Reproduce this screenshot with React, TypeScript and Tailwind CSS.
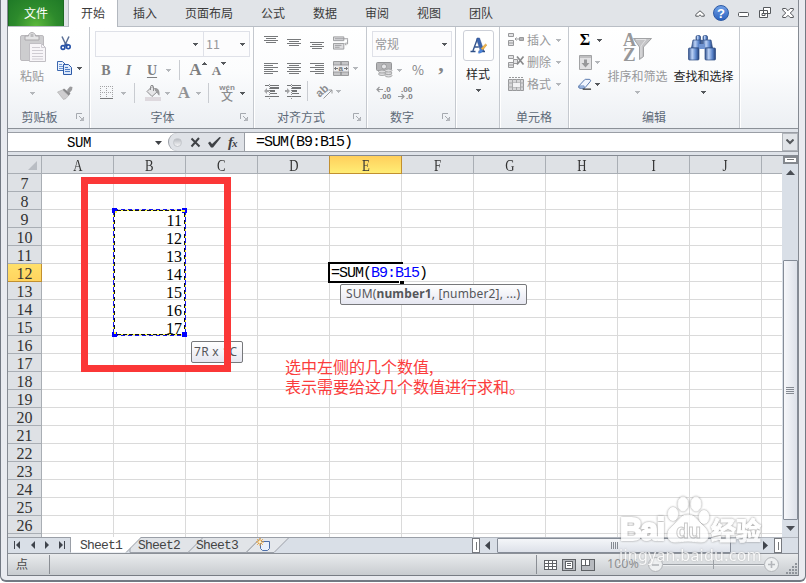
import React from 'react';
import clsx from 'clsx';

const MENU_TABS = ['插入', '页面布局', '公式', '数据', '审阅', '视图', '团队'];
const COLUMNS = ['A', 'B', 'C', 'D', 'E', 'F', 'G', 'H', 'I', 'J'];
const ROWS = Array.from({ length: 20 }, (_, i) => i + 7);
const VALUES: Record<number, number> = { 9: 11, 10: 12, 11: 13, 12: 14, 13: 15, 14: 16, 15: 17 };

/* ---------- small building blocks ---------- */

const Arrow = ({ dim = false, className }: { dim?: boolean; className?: string }) => (
  <svg width="5" height="3" viewBox="0 0 5 3" className={clsx('shrink-0', className)} shapeRendering="crispEdges">
    <path d="M0 0H5V1H4V2H3V3H2V2H1V1H0Z" fill={dim ? '#b4b7bb' : '#55585c'} />
  </svg>
);

const Slot = ({ className, children }: { className?: string; children?: React.ReactNode }) => (
  <div className={clsx('flex shrink-0 items-center justify-center', className)}>{children}</div>
);

const Divider = ({ className }: { className?: string }) => (
  <Slot className={className}>
    <span className="h-5 w-px bg-[#c9ccd1]" />
  </Slot>
);

const Launcher = () => (
  <svg width="8" height="8" viewBox="0 0 8 8" className="absolute right-[5px] top-[9px]" fill="none" stroke="#a5a9af">
    <path d="M0.500 6V0.500H6M3 3l3.500 3.500M7.500 4v3.500H4" />
    <path d="M5 5h3v3H5z" fill="#b5b8bd" stroke="none" />
  </svg>
);

interface GroupProps {
  label?: string;
  launcher?: boolean;
  className?: string;
  children?: React.ReactNode;
}

const Group = ({ label, launcher, className, children }: GroupProps) => (
  <div className={clsx('flex h-full shrink-0 flex-col border-r border-[#c5c9cf] shadow-[1px_0_0_#ffffff]', className)}>
    <div className="h-[77px] shrink-0">{children}</div>
    <div className={clsx('relative h-6 shrink-0 text-center leading-[25px] text-[#5e6a78]', launcher && 'pr-[18px]')}>
      {label}
      {launcher && <Launcher />}
    </div>
  </div>
);

/* ---------- ribbon icons ---------- */

const PasteIcon = () => (
  <svg width="28" height="31" viewBox="0 0 28 31">
    <rect x="0.500" y="3.500" width="23" height="25" rx="1.500" fill="#cdcdcf" stroke="#bbb9bd" />
    <path d="M5 4h3.500c0-4.500 7-4.500 7 0H19v4H5z" fill="#e5e5e6" stroke="#aaa8ab" />
    <rect x="10.500" y="2" width="3" height="3" fill="#bdbdbf" />
    <path d="M9.500 11.500h12l4 4v14h-16z" fill="#f7f5f8" stroke="#c1bfc4" />
    <path d="M21.500 11.500v4h4M12 15.500h8M12 18.500h11M12 21.500h11M12 24.500h11M12 27h11" stroke="#cfccd2" fill="none" />
  </svg>
);

const CutIcon = () => (
  <svg width="12" height="15" viewBox="0 0 12 15" fill="none">
    <path d="M2 0.500l4 8.500M9 0.500L5 9" stroke="#5a6f96" strokeWidth="1.500" />
    <path d="M4.500 7.500h3v3h-3z" fill="#3a5c9c" />
    <circle cx="3" cy="11.500" r="1.900" stroke="#2551a8" strokeWidth="1.600" />
    <circle cx="8.300" cy="10.800" r="1.900" stroke="#2551a8" strokeWidth="1.600" />
  </svg>
);

const CopyIcon = () => (
  <svg width="16" height="14" viewBox="0 0 16 14">
    <path d="M0.500 0.500h5l3 3v6h-8z" fill="#eaf2fd" stroke="#3c68b0" />
    <path d="M2 3.500h3M2 5.500h4M2 7.500h4" stroke="#6f98d6" />
    <path d="M6.500 3.500h5l3 3v7h-8z" fill="#dbe8fb" stroke="#2d5aa8" />
    <path d="M8 6.500h3M8 8.500h5M8 10.500h5" stroke="#4f7dc6" />
  </svg>
);

const BrushIcon = () => (
  <svg width="16" height="14" viewBox="0 0 16 14">
    <path d="M10 4l3-3.500 2.500 0.500-0.500 3-3 3.500z" fill="#9c9c9e" />
    <path d="M7 2.500l6.500 5-2 2.500L5.500 4z" fill="#88888a" />
    <path d="M5.500 4L0.500 6l6 7.500 2.500-1 2.500-3z" fill="#cfced0" stroke="#aaa" strokeWidth="0.600" />
  </svg>
);

const BorderIcon = () => (
  <svg width="14" height="14" viewBox="0 0 14 14" shapeRendering="crispEdges" fill="none" stroke="#a3a3a5">
    <path d="M0.500 0v12M6.500 0v12M12.500 0v12M0 0.500h13M0 6.500h13" strokeDasharray="1 1" />
    <path d="M0 12.500h13" stroke="#77787a" />
  </svg>
);

const BucketIcon = () => (
  <svg width="16" height="16" viewBox="0 0 16 16">
    <path d="M2 6.500l5-5 5.500 5-5.500 5z" fill="#e6e6e8" stroke="#8e8e90" />
    <path d="M5.500 5V1.500c0-1.500 3-1.500 3 0V6" fill="none" stroke="#8e8e90" />
    <path d="M10 3c3 0 5 2 4.500 7.500-2 0-2-4-4.500-4.500z" fill="#9b9b9d" />
    <rect y="12" width="16" height="4" fill="#ded9de" />
  </svg>
);

const PhoneticIcon = () => (
  <span className="flex flex-col items-center font-['Liberation_Sans','Noto_Sans_CJK_SC',sans-serif] text-[#8b8c8e]">
    <span className="h-[7px] text-[8px] font-bold leading-[6px]">wén</span>
    <span className="h-[10px] text-[12px] font-medium leading-[10px]">文</span>
  </span>
);

// Text lines of the paragraph buttons, the short ones follow the alignment
const LinesIcon = ({ kind }: { kind: 'left' | 'center' | 'right' }) => {
  const short = kind === 'left' ? 0 : kind === 'center' ? 2 : 5;
  const shortWidth = kind === 'center' ? 10 : 9;
  return (
    <svg width="14" height="11" viewBox="0 0 14 11" shapeRendering="crispEdges" fill="#77797b">
      {[0, 1, 2, 3, 4, 5].map((i) => (
        <rect key={i} x={i % 2 ? short : 0} y={i * 2} width={i % 2 ? shortWidth : 14} height="1" />
      ))}
    </svg>
  );
};

const VerticalIcon = () => (
  <svg width="14" height="7" viewBox="0 0 14 7" shapeRendering="crispEdges" fill="#77797b">
    <path d="M0 0h14v1H0zM2 2h10v1H2zM0 4h14v1H0zM2 6h10v1H2z" />
  </svg>
);

const WrapIcon = () => (
  <svg width="17" height="16" viewBox="0 0 17 16" fill="none" stroke="#9a9b9d">
    <path d="M0.500 1.500h11v4H0.500zM0.500 8.500h11v6H0.500z" fill="#dedee0" />
    <path d="M2 3.500h14M2 10.500h7M2 12.500h5" />
    <path d="M15.500 4v5h-2M14 7.500L12.500 9l1.500 1.500" />
  </svg>
);

const MergeIcon = () => (
  <svg width="16" height="15" viewBox="0 0 16 15">
    <path d="M0.500 0.500h15v14H0.500z" fill="#c6c6c8" stroke="#9a9b9d" />
    <path d="M0 4h16v7H0z" fill="#ececee" stroke="#909193" strokeWidth="0.800" />
    <path d="M8 1v3M8 11v3" stroke="#77797b" />
    <path d="M1.500 7.500h3.500M3 6L1.500 7.500 3 9M14.500 7.500H11M13 6l1.500 1.500L13 9" stroke="#77797b" fill="none" />
    <text x="5.500" y="10" fontSize="8" fontWeight="bold" fill="#77797b" fontFamily="Liberation Sans">a</text>
  </svg>
);

const IndentIcon = ({ increase = false }: { increase?: boolean }) => (
  <svg width="16" height="15" viewBox="0 0 16 15" shapeRendering="crispEdges">
    <path d="M2 1h4v1H2zM2 12h4v1H2zM7 1h9v1H7zM7 3h9v2H7zM7 6h5v2H7zM7 9h7v1H7zM7 12h9v1H7z" fill="#727476" />
    <path d="M6.500 0v15" stroke="#909193" strokeDasharray="1 1" />
    <path
      d={increase ? 'M0 6h2V4l3 3-3 3V8H0z' : 'M6 6H4V4L1 7l3 3V8h2z'}
      fill="#a3a4a6"
      shapeRendering="auto"
    />
  </svg>
);

const OrientationIcon = () => (
  <svg width="16" height="15" viewBox="0 0 16 15" className="overflow-visible">
    <text x="0" y="11" fontSize="11" fontWeight="bold" fill="#8b8c8e" fontFamily="Liberation Sans" transform="rotate(-42 5 9)">ab</text>
    <path d="M6.500 14.500L15 6M15 9.500V6h-3.500" stroke="#98999b" fill="none" />
  </svg>
);

const CurrencyIcon = () => (
  <svg width="17" height="16" viewBox="0 0 17 16">
    <rect x="0.500" y="0.500" width="15" height="8" rx="1" fill="#b5b5b7" stroke="#949597" />
    <circle cx="8" cy="4.500" r="2.500" fill="#e4e4e6" stroke="#88898b" strokeWidth="0.700" />
    <g fill="#dedee0" stroke="#98999b" strokeWidth="0.800">
      <ellipse cx="12.500" cy="13.500" rx="3.500" ry="1.500" />
      <ellipse cx="12.500" cy="11" rx="3.500" ry="1.500" />
      <ellipse cx="12.500" cy="8.500" rx="3.500" ry="1.500" />
      <ellipse cx="6" cy="12" rx="3.500" ry="1.500" />
      <ellipse cx="6" cy="9.500" rx="3.500" ry="1.500" />
    </g>
  </svg>
);

const DecimalIcon = ({ increase = false }: { increase?: boolean }) => (
  <svg
    width="17"
    height="14"
    viewBox="0 0 17 14"
    className="overflow-visible"
    fill="#7c7d7f"
    fontFamily="Liberation Sans"
    fontSize="8"
    fontWeight="bold"
  >
    <text x={increase ? 8 : 3} y="6">{increase ? '.0' : '.00'}</text>
    <text x={increase ? 4 : 8} y="13">{increase ? '.00' : '.0'}</text>
    <path
      d={increase ? 'M7 3.500H1M3.500 1L1 3.500 3.500 6' : 'M0 10.500h6M3.500 8L6 10.500 3.500 13'}
      stroke="#98999b"
      fill="none"
      strokeWidth="1.200"
    />
  </svg>
);

const StyleIcon = () => (
  <svg width="18" height="18" viewBox="0 0 18 18">
    <path d="M8.500 1.500L3.900 14M5.300 10h4.500" fill="none" stroke="#34558e" strokeWidth="1.400" />
    <path d="M8 1h2.500l4.500 13h-3.500L7.800 3z" fill="#3c66b1" stroke="#2b4b86" strokeWidth="0.500" />
    <path d="M1.500 14.500h5M9.500 14.500h6.500" stroke="#2e4f87" strokeWidth="1.300" />
    <path d="M16.500 7l1.300 1-4 5-2-1.300z" fill="#f0b64a" stroke="#c8872a" strokeWidth="0.500" />
    <path d="M11.500 11.500l2.500 2c-1 3-4 3.300-5.500 2.500 2-0.500 1.500-3 3-4.500z" fill="#4a82d8" />
  </svg>
);

const CellsIcon = ({ kind }: { kind: 'insert' | 'delete' | 'format' }) => (
  <svg width="17" height="16" viewBox="0 0 17 16" fill="#e3e3e5" stroke="#98999b">
    {kind === 'format' ? (
      <>
        <path d="M0.500 3.500h15v11H0.500z" fill="#d6d6d8" />
        <path d="M0 7h16M0 11h16M4.500 3v12M8.500 3v12M12.500 3v12" stroke="#a6a7a9" />
        <path d="M1 1.500h14" strokeDasharray="2 1" />
        <path d="M5 7h7v4H5z" fill="#f1f1f3" stroke="none" />
      </>
    ) : (
      <>
        <path d="M0.500 1.500h5v3h-5zM0.500 8.500h5v5h-5zM0 11h6" />
        {kind === 'insert' ? (
          <>
            <path d="M11.500 5.500h4v3h-4z" fill="#b5b5b7" />
            <path d="M11 7H7M8.500 5.500L7 7l1.500 1.500" fill="none" />
          </>
        ) : (
          <>
            <path d="M5.500 5.500h4v4h-4z" />
            <path d="M9 2.500l6.500 8M15.500 2.500L9 10.500" strokeWidth="1.700" stroke="#898a8c" />
          </>
        )}
      </>
    )}
  </svg>
);

const FillIcon = () => (
  <svg width="13" height="15" viewBox="0 0 13 15">
    <path d="M0.500 0.500h12v14H0.500z" fill="#e1e1e3" stroke="#a2a3a5" />
    <path d="M1 1h11v2H1z" fill="#bfbfc1" />
    <path d="M5 4.500h3V8h2.500l-4 4.500-4-4.500H5z" fill="#98999b" />
  </svg>
);

const EraserIcon = () => (
  <svg width="15" height="14" viewBox="0 0 15 14">
    <path d="M1 9L7 2.500c0.500-0.600 1-0.500 1.500-0.500H12c1.500 0 2 1.500 1 2.500L7.500 11c-0.500 0.500-1 0.500-1.500 0.500H2C0.500 11.500 0 10 1 9z" fill="#f1f6ff" stroke="#4f71a9" />
    <path d="M1 9h5.500L7 11.500H2z" fill="#a9c1e8" stroke="#4f71a9" strokeWidth="0.600" />
    <path d="M5 12.500h9" stroke="#1a1a1a" strokeWidth="1.200" />
  </svg>
);

const SortIcon = () => (
  <svg width="30" height="30" viewBox="0 0 30 30" className="overflow-visible">
    <text x="0" y="13" fontSize="18" fontWeight="bold" fill="#97989a" fontFamily="Liberation Serif">A</text>
    <text x="0" y="28" fontSize="19" fontWeight="bold" fill="#97989a" fontFamily="Liberation Serif">Z</text>
    <path d="M10.500 5.500h18L20.500 14v9.500l-4 3V14z" fill="#c5c5c7" stroke="#a2a3a5" />
    <path d="M13 6.500h10L18 13v11" fill="none" stroke="#e2e2e4" />
  </svg>
);

const FindIcon = () => (
  <svg width="28" height="26" viewBox="0 0 28 26">
    <defs>
      <linearGradient id="barrel">
        <stop offset="0" stopColor="#31528e" />
        <stop offset="0.350" stopColor="#bcd2f6" />
        <stop offset="0.700" stopColor="#5c86cb" />
        <stop offset="1" stopColor="#223f77" />
      </linearGradient>
    </defs>
    <g fill="url(#barrel)" stroke="#2c4a82" strokeWidth="0.700">
      <rect x="8" y="0.500" width="4.500" height="5" rx="1.500" />
      <rect x="15" y="0.500" width="4.500" height="5" rx="1.500" />
      <path d="M5 5h8.500v8H3.500z" />
      <path d="M14.500 5H23l1.500 8h-10z" />
      <rect x="0.500" y="13" width="10.500" height="12" rx="1" />
      <rect x="17" y="13" width="10.500" height="12" rx="1" />
    </g>
    <path d="M11 9h6v5h-6z" fill="#6f93d0" />
  </svg>
);

/* ---------- page sections ---------- */

const TabBar = () => (
  <div className="flex h-[26px] bg-[#e1e4e8] text-[12px] leading-[25px] text-[#3b3b3b]">
    <div className="w-14 border-x border-[#1d6b22] bg-[radial-gradient(ellipse_at_bottom,#5cb83c_0%,#2d8a2c_55%,#1f7a27_100%)] text-center text-white">
      文件
    </div>
    <div className="ml-[4px] h-[27px] w-[50px] border-x border-[#b3b8bf] bg-white text-center">开始</div>
    <div className="ml-[15px] flex gap-7">
      {MENU_TABS.map((tab) => (
        <span key={tab}>{tab}</span>
      ))}
    </div>
    <div className="ml-auto flex items-center pr-[4px]">
      <svg width="10" height="7" viewBox="0 0 10 7" className="mr-[8px]" fill="#fff" stroke="#55585c">
        <path d="M0.800 4.500L5 0.800l4.200 3.700v1.700H6.500L5 4.800 3.500 6.200H0.800z" />
      </svg>
      <span className="mr-[9px] flex size-4 items-center justify-center rounded-full border border-[#2c5aa5] bg-[linear-gradient(#6f9fe6,#2c62bf)] font-['Liberation_Sans'] text-[13px] font-bold leading-none text-white">
        ?
      </span>
      <svg width="12" height="6" viewBox="0 0 12 6" className="mr-[9px] mt-[3px]">
        <rect x="0.500" y="0.500" width="10" height="4" rx="1" fill="#fff" stroke="#55585c" />
      </svg>
      <svg width="13" height="12" viewBox="0 0 13 12" className="mr-[10px]" fill="#fff" stroke="#55585c">
        <path d="M4.500 0.500h7v6h-7zM0.500 3.500h8v7h-8z" />
        <path d="M3 6.500h3v2H3z" />
      </svg>
      <svg width="12" height="10" viewBox="0 0 12 10" fill="#fff" stroke="#55585c">
        <path d="M0.700 0.500h3.100l2.200 2.200 2.200-2.200h3.100v1.500L8.300 5l3 3v1.500H8.200L6 7.300 3.800 9.500H0.700V8l3-3-3-3z" />
      </svg>
    </div>
  </div>
);

const Ribbon = () => (
  <div className="flex h-[103px] border-b border-t border-b-[#8b9097] border-t-[#b9bec5] bg-[linear-gradient(#ffffff_0%,#fbfcfd_45%,#eceff3_100%)] text-[12px]">
    <Group label="剪贴板" launcher className="w-[82px]">
      <div className="flex pl-3 pt-[5px]">
        <div className="flex w-7 flex-col items-center">
          <PasteIcon />
          <span className="-ml-1 mt-[4px] whitespace-nowrap leading-[18px] text-[#97989a]">粘贴</span>
          <Arrow dim className="-ml-1 mt-[7px]" />
        </div>
        <div className="ml-[9px] flex flex-col">
          <div className="ml-[3px] mt-[4px]"><CutIcon /></div>
          <div className="mt-[10px] flex items-center gap-[4px]"><CopyIcon /><Arrow /></div>
          <div className="mt-[11px]"><BrushIcon /></div>
        </div>
      </div>
    </Group>

    <Group label="字体" launcher className="w-[164px]">
      <div className="flex pl-[5px] pt-1">
        <div className="flex h-[26px] w-[109px] items-center justify-end border border-[#dfe1e8] bg-[#fcfcfd] pr-[5px]"><Arrow /></div>
        <div className="-ml-px flex h-[26px] w-[47px] items-center justify-between border border-[#dfe1e8] bg-[#fcfcfd] pl-[2px] pr-[4px] text-[12.5px] text-[#98999b]">
          11<Arrow />
        </div>
      </div>
      <div className="flex h-[26px] items-center pl-[5px] font-['Liberation_Serif'] text-[#7e7f81]">
        <Slot className="w-[22px] text-[14px] font-bold">B</Slot>
        <Slot className="w-[23px] text-[14px] font-bold italic">I</Slot>
        <Slot className="w-[24px] text-[14px] font-bold underline underline-offset-2">U</Slot>
        <Slot className="w-2"><Arrow dim /></Slot>
        <Divider className="w-[14px]" />
        <Slot className="ml-[2px] w-5 text-[17px] font-bold">A<span className="-mt-[14px]"><Arrow className="rotate-180" /></span></Slot>
        <Slot className="ml-[1px] mt-[2px] w-5 text-[13px] font-bold">A<span className="-mt-[16px]"><Arrow /></span></Slot>
      </div>
      <div className="flex h-5 items-center pl-[5px]">
        <Slot className="w-[24px]"><BorderIcon /></Slot>
        <Slot className="w-2"><Arrow dim /></Slot>
        <Divider className="w-[15px]" />
        <Slot className="w-[22px]"><BucketIcon /></Slot>
        <Slot className="w-[6px]"><Arrow dim /></Slot>
        <Slot className="ml-[4px] w-[20px] font-['Liberation_Serif'] text-[17px] font-bold text-[#929395]">A</Slot>
        <Slot className="w-2"><Arrow dim /></Slot>
        <Divider className="w-[12px]" />
        <Slot className="w-[26px]"><PhoneticIcon /></Slot>
        <Slot className="w-[4px]"><Arrow /></Slot>
      </div>
    </Group>

    <Group label="对齐方式" launcher className="w-[113px]">
      <div className="flex h-8 items-start pl-[9px] pt-[9px]">
        <Slot className="w-[15px]"><VerticalIcon /></Slot>
        <Slot className="ml-[8px] mt-[3px] w-[15px]"><VerticalIcon /></Slot>
        <Slot className="ml-[8px] mt-[6px] w-[15px]"><VerticalIcon /></Slot>
        <Slot className="ml-[9px] -mt-[1px] w-4"><WrapIcon /></Slot>
      </div>
      <div className="-mt-px flex h-5 items-center pl-[9px]">
        <Slot className="w-[15px]"><LinesIcon kind="left" /></Slot>
        <Slot className="ml-[8px] w-[15px]"><LinesIcon kind="center" /></Slot>
        <Slot className="ml-[8px] w-[15px]"><LinesIcon kind="right" /></Slot>
        <Slot className="ml-[9px] w-4"><MergeIcon /></Slot>
        <Arrow dim className="ml-[4px]" />
      </div>
      <div className="flex h-[26px] items-center pl-[9px]">
        <Slot className="w-4"><IndentIcon /></Slot>
        <Slot className="ml-[6px] w-4"><IndentIcon increase /></Slot>
        <Divider className="w-[12px]" />
        <Slot className="ml-[4px] w-4"><OrientationIcon /></Slot>
        <Arrow dim className="ml-[3px]" />
      </div>
    </Group>

    <Group label="数字" launcher className="w-[89px]">
      <div className="flex pl-[5px] pt-1">
        <div className="flex h-[26px] w-[80px] items-center justify-between border border-[#dfe1e8] bg-[#fcfcfd] pl-[2px] pr-[4px] text-[#98999b]">
          常规<Arrow />
        </div>
      </div>
      <div className="flex h-[26px] items-center pl-[9px] text-[#858688]">
        <CurrencyIcon />
        <Arrow dim className="ml-[4px]" />
        <Slot className="ml-[8px] w-4 text-[13px]">%</Slot>
        <Slot className="ml-[9px] w-3 font-['Liberation_Serif'] text-[22px] font-bold leading-[10px]"><span className="-mt-3">,</span></Slot>
      </div>
      <div className="flex h-5 items-center gap-[5px] pl-[9px]">
        <DecimalIcon increase />
        <DecimalIcon />
      </div>
    </Group>

    <Group className="w-[44px]">
      <div className="flex flex-col items-center pt-[3px]">
        <div className="ml-px flex h-[31px] w-[31px] items-center justify-center rounded-[3px] border border-[#cdd0d8] bg-white"><StyleIcon /></div>
        <span className="ml-px mt-[4px] leading-[18px] text-[#262626]">样式</span>
        <Arrow className="ml-px mt-[6px]" />
      </div>
    </Group>

    <Group label="单元格" className="w-[69px]">
      <div className="flex flex-col pl-[8px] pt-[2px] text-[#97989a]">
        {(['insert', 'delete', 'format'] as const).map((kind, i) => (
          <div key={kind} className="flex h-[22px] items-center">
            <CellsIcon kind={kind} />
            <span className="ml-[2px]">{['插入', '删除', '格式'][i]}</span>
            <Arrow dim className="ml-[5px]" />
          </div>
        ))}
      </div>
    </Group>

    <Group label="编辑" className="w-[171px]">
      <div className="flex pt-[2px]">
        <div className="w-[36px] pl-[9px]">
          <div className="flex h-[22px] items-center"><Slot className="w-[14px] font-['Liberation_Serif'] text-[16px] font-bold leading-none text-black">Σ</Slot><Arrow className="ml-[5px]" /></div>
          <div className="flex h-[22px] items-center"><Slot className="w-[14px]"><FillIcon /></Slot><Arrow dim className="ml-[3px]" /></div>
          <div className="flex h-[22px] items-center"><Slot className="w-[14px]"><EraserIcon /></Slot><Arrow className="ml-[3px]" /></div>
        </div>
        <div className="flex w-[65px] flex-col items-center whitespace-nowrap pt-[4px] text-[#97989a]">
          <SortIcon />
          <span className="mt-[4px] leading-[18px]">排序和筛选</span>
          <Arrow dim className="mt-[6px]" />
        </div>
        <div className="ml-px flex w-[65px] flex-col items-center whitespace-nowrap pt-[6px] text-[#262626]">
          <div className="-ml-[4px]"><FindIcon /></div>
          <span className="mt-[6px] leading-[18px]">查找和选择</span>
          <Arrow className="mt-[6px]" />
        </div>
      </div>
    </Group>
  </div>
);

const FormulaBar = () => (
  <div className="flex h-[27px] flex-col border-b border-[#858a92] bg-[#dfe3e9]">
    <div className="mt-[3px] flex h-5 border-y border-[#9a9ea5] bg-white font-['Liberation_Mono'] text-[15px] leading-[20px] tracking-[-1px] text-black">
      <div className="flex w-[160px] items-center pl-[59px] pt-px text-[14px] tracking-[-0.4px]">
        SUM
        <svg width="7" height="4" viewBox="0 0 7 4" className="ml-auto mr-[6px]"><path d="M0 0h7L3.500 4z" fill="#3f4246" /></svg>
      </div>
      <div className="flex w-[77px] items-center rounded-l-full border-l border-r border-l-[#9a9ea5] border-r-[#9a9ea5] bg-[#dfe2e7]">
        <span className="ml-[4px] size-[9px] rounded-full border border-[#c3c6cb] bg-[linear-gradient(#b9bcc2,#f4f5f7)]" />
        <svg width="11" height="11" viewBox="0 0 11 11" className="ml-[8px]" stroke="#3f4246" fill="none"><path d="M1.500 1.500l8 8M9 1L1.500 9.500" strokeWidth="2" /></svg>
        <svg width="13" height="11" viewBox="0 0 13 11" className="ml-[7px]"><path d="M0 6l2-1.500 2 2.500L11.500 0l1.500 0.500L5 10.500H3z" fill="#3f4246" /></svg>
        <span className="ml-[7px] font-['Liberation_Serif'] text-[15px] font-bold italic text-[#3f4246]">f<span className="text-[11px]">x</span></span>
      </div>
      <span className="ml-[11px]">=SUM(B9:B15)</span>
      <div className="ml-auto flex w-4 items-center justify-center border border-[#b0b4ba] bg-[#e1e4e8]">
        <svg width="8" height="6" viewBox="0 0 8 6"><path d="M0.500 0.500L4 4l3.500-3.500" stroke="#55585c" strokeWidth="2" fill="none" /></svg>
      </div>
    </div>
  </div>
);

const Tooltip = ({ className, children }: { className?: string; children: React.ReactNode }) => (
  <div className={clsx('absolute whitespace-nowrap rounded-[2px] border border-[#77787b] bg-[linear-gradient(#ffffff,#e6e7f1)] text-[12px] text-[#55565a]', className)}>
    {children}
  </div>
);

// Marching ants around B9:B15
const Marquee = () => (
  <svg width="76" height="129" viewBox="0 0 76 129" className="absolute left-[104px] top-[52px]" fill="none">
    <path d="M2 2.500h72M2 126.500h72" stroke="#ffff33" />
    <path d="M2 1.500h72M2 127.500h72" stroke="#1616f0" strokeDasharray="4 3" />
    <path d="M5 2.500h66M5 126.500h66" stroke="#111" strokeDasharray="4 2" />
    <path d="M1.500 2v126M73.500 2v126" stroke="#ffff33" />
    <path d="M1.500 2v126M73.500 2v126" stroke="#1616f0" strokeDasharray="5 2" />
    <path d="M2.500 5v121M72.500 5v121" stroke="#111" strokeDasharray="4 3" />
    <path d="M0 0h5v5H0zM70 0h5v5h-5zM0 124h5v5H0zM70 124h5v5h-5z" fill="#0000ff" />
    <path d="M3 3h2v2H3zM70 2h3v2h-3zM2 124h2v2H2z" fill="#ffff33" />
  </svg>
);

const SheetGrid = () => (
  <div className="relative h-[381px] w-[774px] overflow-hidden bg-white font-['Liberation_Serif'] text-[16px] text-[#333]">
    <div className="flex h-[18px] w-max border-b border-[#a9aeb4] bg-[#dee1e5]">
      <div className="flex w-[34px] items-end justify-end border-r border-[#a9aeb4] pb-[3px] pr-[4px]">
        <svg width="9" height="9"><path d="M9 0v9H0z" fill="#b9bdc3" /></svg>
      </div>
      {COLUMNS.map((col) => (
        <div
          key={col}
          className={clsx(
            'text-center leading-[20px]',
            col === 'E'
              ? '-ml-px box-content h-[17px] w-[71px] border border-t-0 border-[#c2902f] bg-[linear-gradient(#ffcf5c,#ffed75)]'
              : 'h-[18px] w-[72px] border-r border-[#a9aeb4]',
          )}
        >
          <span className="inline-block scale-x-[0.8]">{col}</span>
        </div>
      ))}
      <div className="w-6" />
    </div>
    {ROWS.map((row) => (
      <div key={row} className="flex h-[18px] w-max">
        <div
          className={clsx(
            'w-[34px] border-b border-r text-center leading-[20px]',
            row === 12 ? 'border-[#c2902f] bg-[linear-gradient(#ffe06a,#ffd45f)]' : 'border-[#a9aeb4] bg-[#dee1e5]',
          )}
        >
          {row}
        </div>
        {COLUMNS.map((col) => (
          <div key={col} className="w-[72px] border-b border-r border-[#dadada] pr-[3px] text-right leading-[21px] text-black">
            {col === 'B' && VALUES[row]}
          </div>
        ))}
        <div className="w-6 border-b border-[#dadada]" />
      </div>
    ))}
    <div className="flex h-[3px]">
      <div className="w-[34px] shrink-0 border-r border-[#a9aeb4] bg-[#dee1e5]" />
      {COLUMNS.map((col) => <div key={col} className="w-[72px] shrink-0 border-r border-[#dadada]" />)}
    </div>

    {/* Overlays floating on the cells */}
    <Marquee />
    <div className="absolute left-[320px] top-[106px] h-[21px] w-[75px] border-2 border-r-0 border-black" />
    <div className="absolute left-[322px] top-[108px] h-[17px] w-[98px] bg-white pl-px font-['Liberation_Mono'] text-[15px] leading-[20px] tracking-[-1px] text-black">
      =SUM(<span className="text-[#0000ff]">B9:B15</span>)
    </div>
    <div className="absolute left-[391px] top-[124px] size-[5px] border-l border-t border-white bg-black" />
    <Tooltip className="left-[332px] top-[128px] h-[21px] w-[187px] pl-[5px] font-['Noto_Sans'] leading-[17px] tracking-[0.15px]">
      SUM(<b>number1</b>, [number2], ...)
    </Tooltip>
    <Tooltip className="left-[183px] top-[185px] h-[22px] w-[52px] pl-[2px] font-['Noto_Sans'] leading-5 tracking-[0.3px]">7R x 1C</Tooltip>
    <div className="absolute left-[73px] top-[21px] h-[195px] w-[150px] border-[7px] border-[#fb3737]" />
    <p className="absolute left-[277px] top-[200px] whitespace-nowrap font-['Noto_Sans_CJK_SC',sans-serif] text-[16px] leading-[20px] text-[#fb3c3c]">
      选中左侧的几个数值,
      <br />
      表示需要给这几个数值进行求和。
    </p>
  </div>
);

const VerticalScroll = () => (
  <div className="flex h-[381px] w-4 flex-col items-center bg-[#d9dfe7]">
    <div className="h-2 w-[15px] border-2 border-[#85898f] bg-white px-[2px] pt-px">
      <div className="h-px bg-[#77797b]" />
    </div>
    <svg width="9" height="5" viewBox="0 0 9 5" className="mt-[6px]"><path d="M4.500 0L9 5H0z" fill="#4a4e55" /></svg>
    <div className="mt-[85px] flex h-[260px] w-[15px] flex-col items-center justify-center gap-px rounded-[1px] border border-[#858c97] bg-[linear-gradient(to_right,#f6f7fa,#dde1e9)]">
      {[0, 1, 2, 3].map((i) => <span key={i} className="h-px w-2 bg-[#858a92]" />)}
    </div>
    <svg width="9" height="5" viewBox="0 0 9 5" className="mt-[6px]"><path d="M4.500 5L9 0H0z" fill="#4a4e55" /></svg>
  </div>
);

const SplitHandle = () => (
  <div className="flex h-[15px] w-2 shrink-0 items-center justify-center border border-[#777a80] bg-white">
    <span className="h-2 w-px bg-[#77797b]" />
  </div>
);

const SheetTabs = () => (
  <div className="relative flex h-[17px] items-center border-b border-[#8b9097] bg-[#d9dfe7] font-['Liberation_Mono'] text-[13px] tracking-[-0.8px] text-[#444]">
    {/* Tab outlines sit behind the labels */}
    <svg width="468" height="16" viewBox="0 0 468 16" className="absolute left-0 top-0" stroke="#9a9fa7">
      <path d="M-1 0.500H468" />
      <path d="M238 15.500L253 0.500H281L266 15.500z" fill="#e4e7eb" />
      <path d="M180 15.500V0.500H253L238 15.500z" fill="#e1e4e8" />
      <path d="M122 15.500V0.500H195L180 15.500z" fill="#e1e4e8" />
      <path d="M62.500 -1V15.500H118L134 -1z" fill="#fff" stroke="none" />
      <path d="M62.500 0V15.500M133 0.500L118 15.500" />
    </svg>
    <svg width="54" height="8" viewBox="0 0 54 8" className="relative ml-[5px]" fill="#3f444c">
      <path d="M1 0h1v8H1zM7 0v8L3 4zM22 0v8l-4-4zM32 0v8l4-4zM46 0v8l4-4zM51 0h1v8h-1z" />
    </svg>
    <span className="relative ml-[13px] mt-[2px] w-[58px]">Sheet1</span>
    <span className="relative mt-[2px] w-[58px]">Sheet2</span>
    <span className="relative mt-[2px] w-[58px]">Sheet3</span>
    <svg width="16" height="14" viewBox="0 0 16 14" className="relative ml-[2px]">
      <path d="M4.500 3.500h9v7l-2 2h-5l-2-2z" fill="#e9f0fb" stroke="#4c6ea8" />
      <path d="M4 0v8M0 4h8M1.200 1.200l5.600 5.600M6.800 1.200L1.200 6.800" stroke="#e9a13a" />
      <circle cx="4" cy="4" r="1.300" fill="#fff3c4" />
    </svg>
    <div className="absolute right-0 top-0 flex h-4 w-[326px] items-center border-t border-[#b1b6be] bg-[#d9dfe7]">
      <SplitHandle />
      <svg width="5" height="9" viewBox="0 0 5 9" className="ml-[5px]"><path d="M5 0v9L0 4.500z" fill="#3f444c" /></svg>
      <div className="ml-[7px] flex h-[15px] w-[234px] items-center justify-center gap-px rounded-[1px] border border-[#858c97] bg-[linear-gradient(#f4f6f9,#dde1e9)]">
        {[0, 1, 2, 3].map((i) => <span key={i} className="h-[7px] w-px bg-[#858a92]" />)}
      </div>
      <svg width="5" height="9" viewBox="0 0 5 9" className="ml-[32px] mr-[6px]"><path d="M0 0v9l5-4.500z" fill="#3f444c" /></svg>
      <SplitHandle />
    </div>
  </div>
);

const StatusBar = () => (
  <div className="flex h-[22px] items-center border-b border-[#777c84] bg-[linear-gradient(#e9ebed,#c8ccd0)] text-[12px] text-[#4a4a4a]">
    <span className="ml-[8px] w-[33px] pb-[2px]">点</span>
    <span className="h-[19px] w-px bg-[#8a8e94]" />
    <span className="ml-[486px] h-[19px] w-px bg-[#8a8e94]" />
    <svg width="13" height="10" viewBox="0 0 13 10" className="ml-[7px]" shapeRendering="crispEdges" fill="#fff" stroke="#5f6266">
      <path d="M0.500 0.500h12v9H0.500zM0 3.500h13M0 6.500h13M4.500 0v10M8.500 0v10" />
    </svg>
    <svg width="14" height="12" viewBox="0 0 14 12" className="ml-[5px]" shapeRendering="crispEdges" stroke="#5f6266">
      <path d="M0.500 0.500h13v11H0.500z" fill="#b7babf" />
      <path d="M3.500 2.500h7v7h-7z" fill="#fff" />
      <path d="M5 4.500h4M5 6.500h4" />
    </svg>
    <svg width="14" height="12" viewBox="0 0 14 12" className="ml-[5px]" shapeRendering="crispEdges" stroke="#5f6266">
      <path d="M0.500 0.500h13v11H0.500z" fill="#b7babf" />
      <path d="M0.500 0.500h4v6h-4zM4.500 0.500h4v6h-4z" fill="#fff" />
    </svg>
    <span className="ml-[12px] w-[41px] whitespace-nowrap font-['Noto_Sans'] text-[12.5px] text-[#8f9092]">100%</span>
    <div className="flex items-center">
      <span className="flex size-[15px] items-center justify-center rounded-full border border-[#b3b6ba] bg-[#eef0f1]"><span className="h-[2px] w-[7px] bg-[#bfc2c5]" /></span>
      <span className="flex h-[7px] w-[101px] items-center justify-center bg-[linear-gradient(transparent_3px,#9da1a6_3px,#9da1a6_4px,#eceef0_4px,#eceef0_5px,transparent_5px)]"><span className="h-[9px] w-px bg-[#9da1a6]" /></span>
      <svg width="15" height="15" viewBox="0 0 15 15"><circle cx="7.500" cy="7.500" r="7" fill="#eef0f1" stroke="#b3b6ba" /><path d="M4 7.500h7M7.500 4v7" stroke="#b3b6ba" strokeWidth="1.600" /></svg>
    </div>
    <svg width="12" height="12" viewBox="0 0 12 12" className="ml-auto mt-[8px]" fill="#8f949b">
      <path d="M9 0h2v2H9zM6 3h2v2H6zM9 3h2v2H9zM3 6h2v2H3zM6 6h2v2H6zM9 6h2v2H9zM0 9h2v2H0zM3 9h2v2H3zM6 9h2v2H6zM9 9h2v2H9z" />
    </svg>
  </div>
);

const Watermark = () => (
  <div className="pointer-events-none absolute left-[618px] top-[494px] h-[72px] w-[146px] font-['Liberation_Sans','Noto_Sans_CJK_SC',sans-serif] opacity-80">
    <svg
      width="146"
      height="52"
      viewBox="0 0 146 52"
      className="overflow-visible [filter:drop-shadow(0_0_0.8px_#777777)]"
      fill="#ffffff"
      stroke="#ffffff"
    >
      <ellipse cx="55" cy="20" rx="5" ry="6.500" />
      <ellipse cx="65" cy="10" rx="5" ry="7" />
      <ellipse cx="78" cy="10" rx="5" ry="7" />
      <ellipse cx="86" cy="23" rx="5" ry="6.500" />
      <path d="M70 21c8 0 10 7 16 12 5 4 7 15-3 15-5 0-8-1-13-1s-8 1-13 1c-9 0-9-11-3-15 6-5 8-12 16-12z" />
      <text x="2" y="46" fontSize="31" fontWeight="bold" textLength="45" strokeWidth="2">Bai</text>
      <text x="58" y="44" fontSize="21" fontWeight="bold" textLength="25" stroke="#bdbdbd">du</text>
      <text x="93" y="46" fontSize="25" fontWeight="bold" textLength="50" strokeWidth="1">经验</text>
    </svg>
    <div className="-mt-[1px] ml-[1px] font-['Noto_Sans'] text-[16px] leading-[20px] tracking-[0.25px] text-white [text-shadow:0_0_2px_#999999]">jingyan.baidu.com</div>
  </div>
);

export default function App() {
  return (
    <div className="relative h-[583px] w-[806px] overflow-hidden bg-white font-['Noto_Sans_CJK_SC',sans-serif]">
      <div className="h-[582px] w-[806px] rounded-b-[6px] border-x border-b-2 border-[#737983] bg-[#e9ebf0] px-[6px]">
        <div className="h-[576px] border-x border-[#858a92]">
          <TabBar />
          <Ribbon />
          <FormulaBar />
          <div className="flex">
            <SheetGrid />
            <VerticalScroll />
          </div>
          <SheetTabs />
          <StatusBar />
        </div>
      </div>
      <Watermark />
    </div>
  );
}
